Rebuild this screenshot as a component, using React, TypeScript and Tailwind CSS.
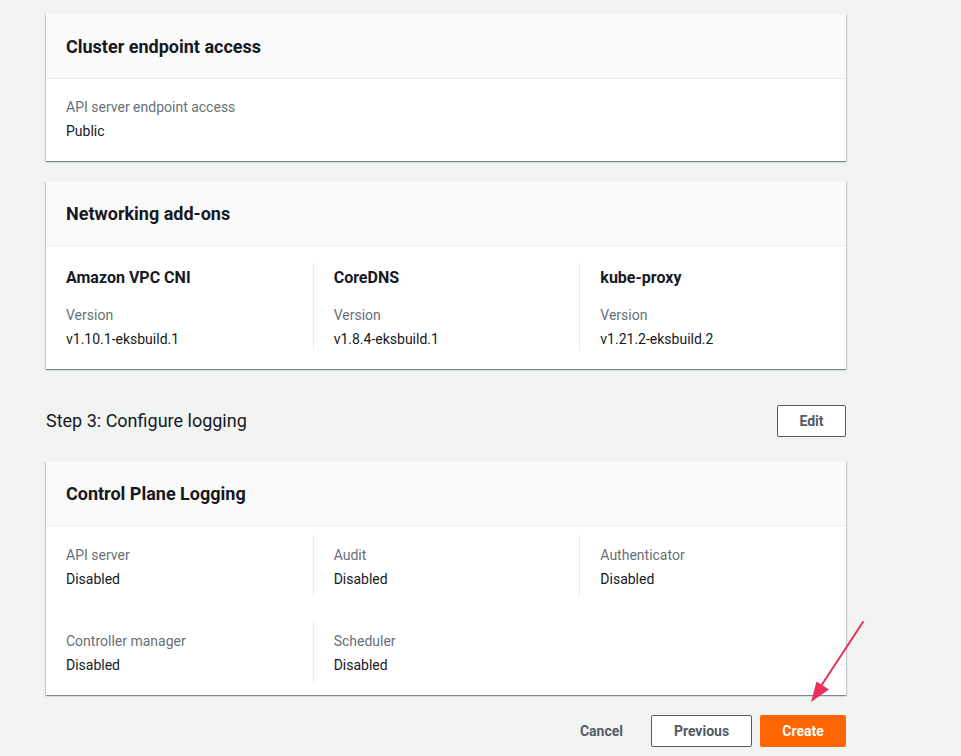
import React from "react";

const font = { fontFamily: 'Roboto, "Open Sans", Arial, sans-serif' };

function Card({ title, children }: { title: string; children: React.ReactNode }) {
  return (
    <div className="bg-white shadow-[0_1px_1px_0_rgba(0,28,36,0.3),1px_1px_1px_0_rgba(0,28,36,0.15),-1px_1px_1px_0_rgba(0,28,36,0.15)]">
      <div className="h-[65px] flex items-center px-5 pt-[2px] bg-[#fafafa] border-b border-[#eaeded]">
        <h2 className="text-[18px] font-bold text-[#16191f] leading-[22px]">{title}</h2>
      </div>
      {children}
    </div>
  );
}

function KV({ label, value, first }: { label: string; value: string; first?: boolean }) {
  return (
    <div className={first ? "pl-5" : "pl-5 border-l border-[#eaeded]"}>
      <div className="pt-[9px] pb-[7px]">
        <div className="text-[14px] leading-[22px] text-[#687078]">{label}</div>
        <div className="text-[14px] leading-[22px] mt-[2px] text-[#16191f]">{value}</div>
      </div>
    </div>
  );
}

function Addon({ name, version, first }: { name: string; version: string; first?: boolean }) {
  return (
    <div className={first ? "pl-5" : "pl-5 border-l border-[#eaeded]"}>
      <div className="pt-[3px]">
        <div className="text-[16px] font-bold leading-[24px] text-[#16191f]">{name}</div>
        <div className="text-[14px] leading-[22px] mt-[14px] text-[#687078]">Version</div>
        <div className="text-[14px] leading-[22px] mt-[2px] text-[#16191f]">{version}</div>
      </div>
    </div>
  );
}

export default function App() {
  return (
    <div className="relative w-full min-h-[756px] bg-[#f2f3f3] overflow-hidden" style={font}>
      <div className="ml-[46px] w-[800px] pt-[14px] flex flex-col">
        <Card title="Cluster endpoint access">
          <div className="px-5 pt-[17px] pb-[19px]">
            <div className="text-[14px] leading-[22px] text-[#687078]">API server endpoint access</div>
            <div className="text-[14px] leading-[22px] mt-[2px] text-[#16191f]">Public</div>
          </div>
        </Card>

        <div className="mt-5">
          <Card title="Networking add-ons">
            <div className="grid grid-cols-3 pt-[17px] pb-[19px]">
              <Addon first name="Amazon VPC CNI" version="v1.10.1-eksbuild.1" />
              <Addon name="CoreDNS" version="v1.8.4-eksbuild.1" />
              <Addon name="kube-proxy" version="v1.21.2-eksbuild.2" />
            </div>
          </Card>
        </div>

        <div className="mt-[36px] h-8 flex items-center justify-between">
          <h2 className="text-[18px] leading-[22px] text-[#16191f]">Step 3: Configure logging</h2>
          <button className="h-8 w-[69px] border border-[#545b64] rounded-[2px] bg-white text-[14px] font-bold text-[#545b64]">
            Edit
          </button>
        </div>

        <div className="mt-6">
          <Card title="Control Plane Logging">
            <div className="grid grid-cols-3 gap-y-6 pt-[9px] pb-[12px]">
              <KV first label="API server" value="Disabled" />
              <KV label="Audit" value="Disabled" />
              <KV label="Authenticator" value="Disabled" />
              <KV first label="Controller manager" value="Disabled" />
              <KV label="Scheduler" value="Disabled" />
            </div>
          </Card>
        </div>

        <div className="mt-5 flex justify-end items-center gap-2">
          <button className="h-8 px-5 text-[14px] font-bold text-[#545b64]">Cancel</button>
          <button className="h-8 w-[101px] border border-[#545b64] rounded-[2px] bg-white text-[14px] font-bold text-[#545b64]">
            Previous
          </button>
          <button className="h-8 w-[86px] rounded-[2px] bg-[#ff6600] text-[14px] font-bold text-white">
            Create
          </button>
        </div>
      </div>

      <svg className="absolute left-0 top-0 pointer-events-none" width="961" height="756">
        <line x1="863" y1="622" x2="821" y2="686" stroke="#e8305a" strokeWidth="2" strokeLinecap="round" />
        <polygon points="811,702 816.5,681.5 829,689.5" fill="#e8305a" />
      </svg>
    </div>
  );
}
